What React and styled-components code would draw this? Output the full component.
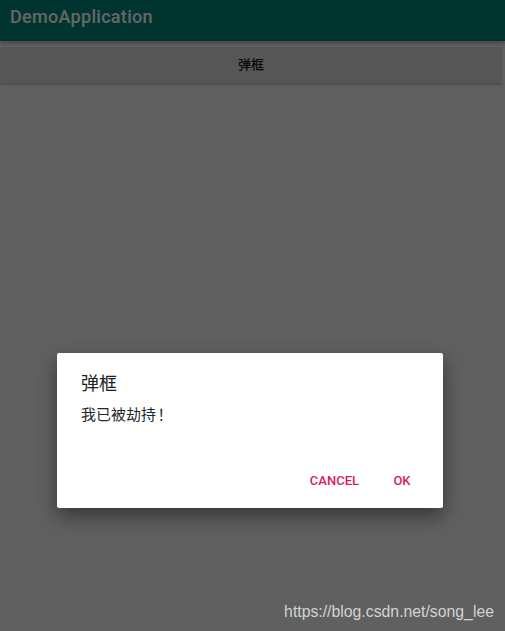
import React from "react";
import styled, { createGlobalStyle } from "styled-components";

const GlobalStyle = createGlobalStyle`
  html, body {
    margin: 0;
    padding: 0;
    height: 100%;
  }
  body {
    font-family: Roboto, "Noto Sans CJK SC", sans-serif;
    background: #fafafa;
  }
  #root {
    height: 100%;
  }
`;

const Screen = styled.div`
  position: relative;
  width: 505px;
  height: 631px;
  overflow: hidden;
  background: #f0f0f0;
  display: flex;
  flex-direction: column;
`;

const AppBar = styled.div`
  height: 41px;
  box-sizing: border-box;
  background: #008577;
  display: flex;
  align-items: center;
  padding: 0 0 9px 10px;
  color: #ffffff;
  font-size: 18px;
  letter-spacing: 0.3px;
  font-weight: 500;
  box-shadow: 0 2px 4px rgba(0, 0, 0, 0.3);
`;

const Content = styled.div`
  flex: 1;
  padding: 6px 3px 0 0;
`;

const ShowButton = styled.button`
  width: 502px;
  height: 36px;
  border: none;
  border-radius: 2px;
  background: #d6d7d7;
  color: #111;
  font-family: "Noto Sans CJK SC", sans-serif;
  font-size: 13px;
  font-weight: 500;
  padding-bottom: 4px;
  box-shadow: 0 2px 2px rgba(0, 0, 0, 0.2);
`;

const Scrim = styled.div`
  position: absolute;
  inset: 0;
  background: rgba(0, 0, 0, 0.6);
  display: flex;
  justify-content: flex-start;
  padding: 353px 0 0 57px;
  box-sizing: border-box;
`;

const Dialog = styled.div`
  width: 386px;
  height: 155px;
  box-sizing: border-box;
  background: #ffffff;
  border-radius: 2px;
  box-shadow: 0 8px 20px rgba(0, 0, 0, 0.45);
  padding: 17px 0 11px 24px;
  display: flex;
  flex-direction: column;
`;

const Title = styled.div`
  font-size: 18px;
  line-height: 24px;
  color: #212121;
  font-family: "Noto Sans CJK SC", sans-serif;
`;

const Message = styled.div`
  margin-top: 10px;
  font-size: 15px;
  line-height: 20px;
  color: #262626;
  font-family: "Noto Sans CJK SC", sans-serif;
`;

const Bang = styled.span`
  display: inline-block;
  width: 18px;
  text-align: center;
`;

const Actions = styled.div`
  margin-top: auto;
  display: flex;
  justify-content: flex-end;
  gap: 3px;
  padding-right: 9px;
`;

const ActionButton = styled.button`
  min-width: 64px;
  height: 36px;
  padding: 2px 8px 0;
  border: none;
  background: transparent;
  color: #d81b60;
  font-family: Roboto, sans-serif;
  font-size: 13px;
  font-weight: 500;
  text-transform: uppercase;
`;

const Watermark = styled.div`
  position: absolute;
  right: 11px;
  bottom: 10px;
  font-family: "Liberation Sans", Arial, sans-serif;
  font-size: 15.8px;
  color: #d2d2d2;
`;

export default function App() {
  return (
    <>
      <GlobalStyle />
      <Screen>
        <AppBar>DemoApplication</AppBar>
        <Content>
          <ShowButton>弹框</ShowButton>
        </Content>
        <Scrim>
          <Dialog>
            <Title>弹框</Title>
            <Message>
              我已被劫持<Bang>！</Bang>
            </Message>
            <Actions>
              <ActionButton>Cancel</ActionButton>
              <ActionButton>OK</ActionButton>
            </Actions>
          </Dialog>
        </Scrim>
        <Watermark>https://blog.csdn.net/song_lee</Watermark>
      </Screen>
    </>
  );
}
